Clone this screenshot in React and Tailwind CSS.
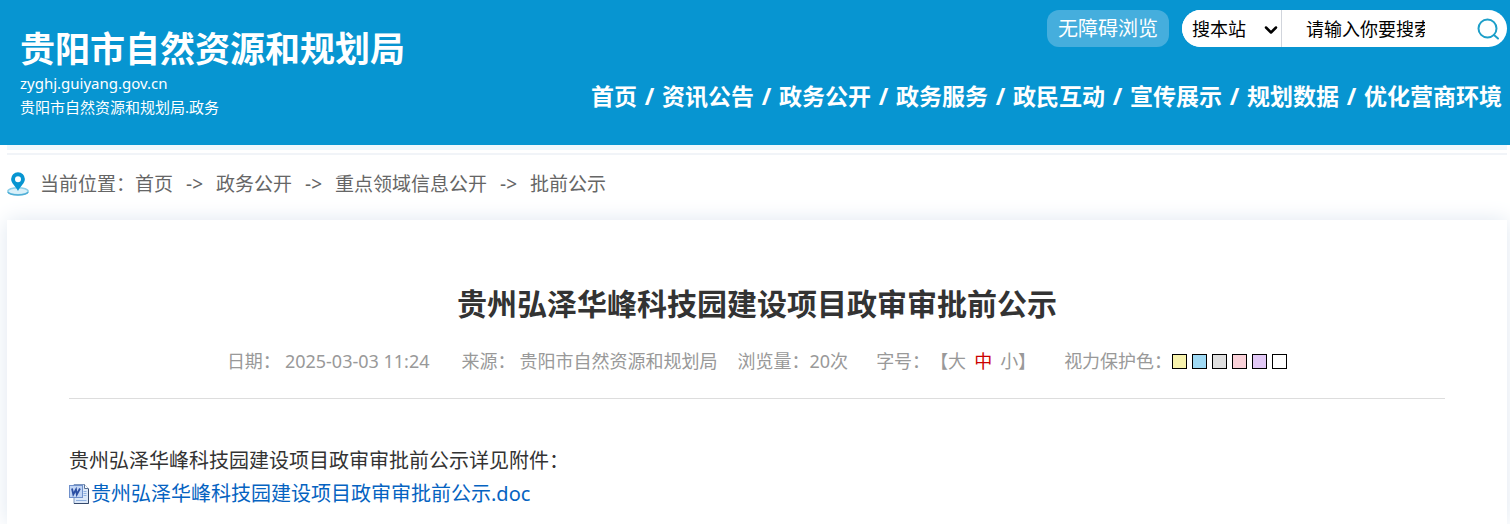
import { ChevronDown } from "lucide-react";

const navItems = [
  "首页",
  "资讯公告",
  "政务公开",
  "政务服务",
  "政民互动",
  "宣传展示",
  "规划数据",
  "优化营商环境",
];

const crumbs = ["首页", "政务公开", "重点领域信息公开", "批前公示"];

const eyeColors = [
  { name: "黄色", className: "bg-[#f8f3ad]" },
  { name: "蓝色", className: "bg-[#9fdaf5]" },
  { name: "灰色", className: "bg-[#dfdfdf]" },
  { name: "粉色", className: "bg-[#fad1d9]" },
  { name: "紫色", className: "bg-[#e2c8f6]" },
  { name: "白色", className: "bg-white" },
];

const PinIcon = () => (
  <svg width="22" height="24" viewBox="0 0 22 24" aria-hidden="true">
    <ellipse cx="11" cy="19.2" rx="10.2" ry="3.5" fill="#d9f0f9" stroke="#8ccfe9" strokeWidth="1.4" />
    <path d="M1 20c1.400 3.900 18.600 3.900 20 0" fill="none" stroke="#4faed6" strokeWidth="1.500" />
    <path
      fillRule="evenodd"
      fill="#0795d1"
      d="M11 .2a6.900 6.900 0 0 0-6.900 6.900c0 4.400 4.600 7 6.900 12 2.300-5 6.900-7.600 6.900-12A6.900 6.900 0 0 0 11 .2zm0 4a3 3 0 1 1 0 6 3 3 0 0 1 0-6z"
    />
  </svg>
);

const SearchIcon = () => (
  <svg width="24" height="24" viewBox="0 0 24 24" fill="none" stroke="#1d9fc9" strokeWidth="2" aria-hidden="true">
    <circle cx="11.500" cy="11.500" r="9" />
    <path d="M18 18l4 3.500" strokeLinecap="round" />
  </svg>
);

const WordIcon = () => (
  <svg width="20" height="20" viewBox="0 0 20 20" aria-hidden="true">
    <path d="M5 .5h10.500l4 4v15H5z" fill="#dce8f8" stroke="#7e97bd" />
    <path d="M15.500 .5v4h4" fill="#fff" stroke="#5a7396" />
    <path d="M14.500 7.500h3M14.500 9.500h3M14.500 11.500h3M7 16.500h10.500" stroke="#8fb0e0" />
    <path d="M19.500 5v14.500H5" fill="none" stroke="#35496b" />
    <rect x=".5" y="1.500" width="13" height="12" fill="#c3d6f4" stroke="#6f90cb" />
    <path
      d="M3 4.500l1.300 6L7 5.500l.8 5L11 4.500"
      fill="none"
      stroke="#2c4fa3"
      strokeWidth="1.800"
    />
  </svg>
);

const Header = () => (
  <header className="bg-[#0795d1] text-white h-[145px] flex justify-between">
    <a href="#" className="block pl-5 pt-[27px]">
      <span className="block text-[35px] leading-[44px] font-bold">贵阳市自然资源和规划局</span>
      <span className="block text-[15px] leading-6">zyghj.guiyang.gov.cn</span>
      <span className="block text-[15px] leading-6">贵阳市自然资源和规划局.政务</span>
    </a>
    <div className="flex flex-col items-end pt-[10px]">
      <div className="flex items-center gap-[13px] pr-[3px]">
        <button
          type="button"
          className="h-[37px] px-[11px] rounded-xl bg-[#45aedd] text-xl"
        >
          无障碍浏览
        </button>
        <form className="flex items-center h-[37px] w-[325px] rounded-full bg-white text-black text-lg overflow-hidden">
          <div className="relative h-full border-r border-gray-300">
            <select
              aria-label="搜索范围"
              className="appearance-none h-full w-[99px] pl-[10px] bg-white leading-6"
            >
              <option>搜本站</option>
            </select>
            <ChevronDown
              className="absolute right-0 top-[10px] w-5 h-5 pointer-events-none"
              strokeWidth={3}
            />
          </div>
          <input
            type="text"
            aria-label="搜索"
            defaultValue="请输入你要搜索"
            className="w-[119px] ml-6 outline-none"
          />
          <button type="submit" aria-label="搜索" className="ml-auto mr-[7px]">
            <SearchIcon />
          </button>
        </form>
      </div>
      <nav className="flex mt-[31px] pr-2 text-[23px] leading-9 font-bold">
        {navItems.map((item, i) => (
          <div key={item} className="flex">
            {i > 0 && <span className="w-[25px] text-center">/</span>}
            <a href="#">{item}</a>
          </div>
        ))}
      </nav>
    </div>
  </header>
);

const Breadcrumb = () => (
  <div className="flex items-center pt-[13px] pb-5 text-[19px] leading-8 text-[#666]">
    <PinIcon />
    <span className="ml-[11px]">当前位置：</span>
    {crumbs.map((item, i) => (
      <span key={item} className="flex">
        {i > 0 && <span className="w-[43px] text-center">-&gt;</span>}
        <a href="#">{item}</a>
      </span>
    ))}
  </div>
);

const ArticleMeta = () => (
  <div className="flex justify-center items-center text-lg leading-7 text-[#999] pb-[23px] border-b border-[#ddd]">
    <span>日期：</span>
    <span className="ml-1">2025-03-03 11:24</span>
    <span className="ml-8">来源：</span>
    <span className="ml-1">贵阳市自然资源和规划局</span>
    <span className="ml-5">浏览量：20次</span>
    <span className="ml-7">字号：</span>
    <div className="flex gap-2">
      <button type="button">【大</button>
      <button type="button" className="text-[#c00]">
        中
      </button>
      <button type="button">小】</button>
    </div>
    <span className="ml-7">视力保护色：</span>
    <div className="flex gap-[5px]">
      {eyeColors.map((c) => (
        <button
          key={c.name}
          type="button"
          aria-label={c.name}
          className={`w-[15px] h-[15px] border border-black ${c.className}`}
        />
      ))}
    </div>
  </div>
);

export default function App() {
  return (
    <div className="bg-white overflow-hidden font-['Noto_Sans','Noto_Sans_CJK_SC',sans-serif]">
      <Header />
      <main className="ml-[7px] mr-[3px]">
        <div className="h-[5px] bg-[#eff8fd]" />
        <div className="h-[2px] mt-[3px] bg-[#f1f4f8]" />
        <Breadcrumb />
        <article className="bg-white px-[62px] pt-[62px] pb-[14px] shadow-[0_0_20px_#dfe7f0]">
          <h1 className="text-center text-3xl leading-[44px] font-bold text-[#333] mb-[21px]">
            贵州弘泽华峰科技园建设项目政审审批前公示
          </h1>
          <ArticleMeta />
          <div className="mt-[45px] text-xl leading-[33px] text-[#333]">
            <p>贵州弘泽华峰科技园建设项目政审审批前公示详见附件：</p>
            <p className="flex items-center gap-[2px]">
              <WordIcon />
              <a href="#" className="text-[#0563c1]">
                贵州弘泽华峰科技园建设项目政审审批前公示.doc
              </a>
            </p>
          </div>
        </article>
      </main>
    </div>
  );
}
